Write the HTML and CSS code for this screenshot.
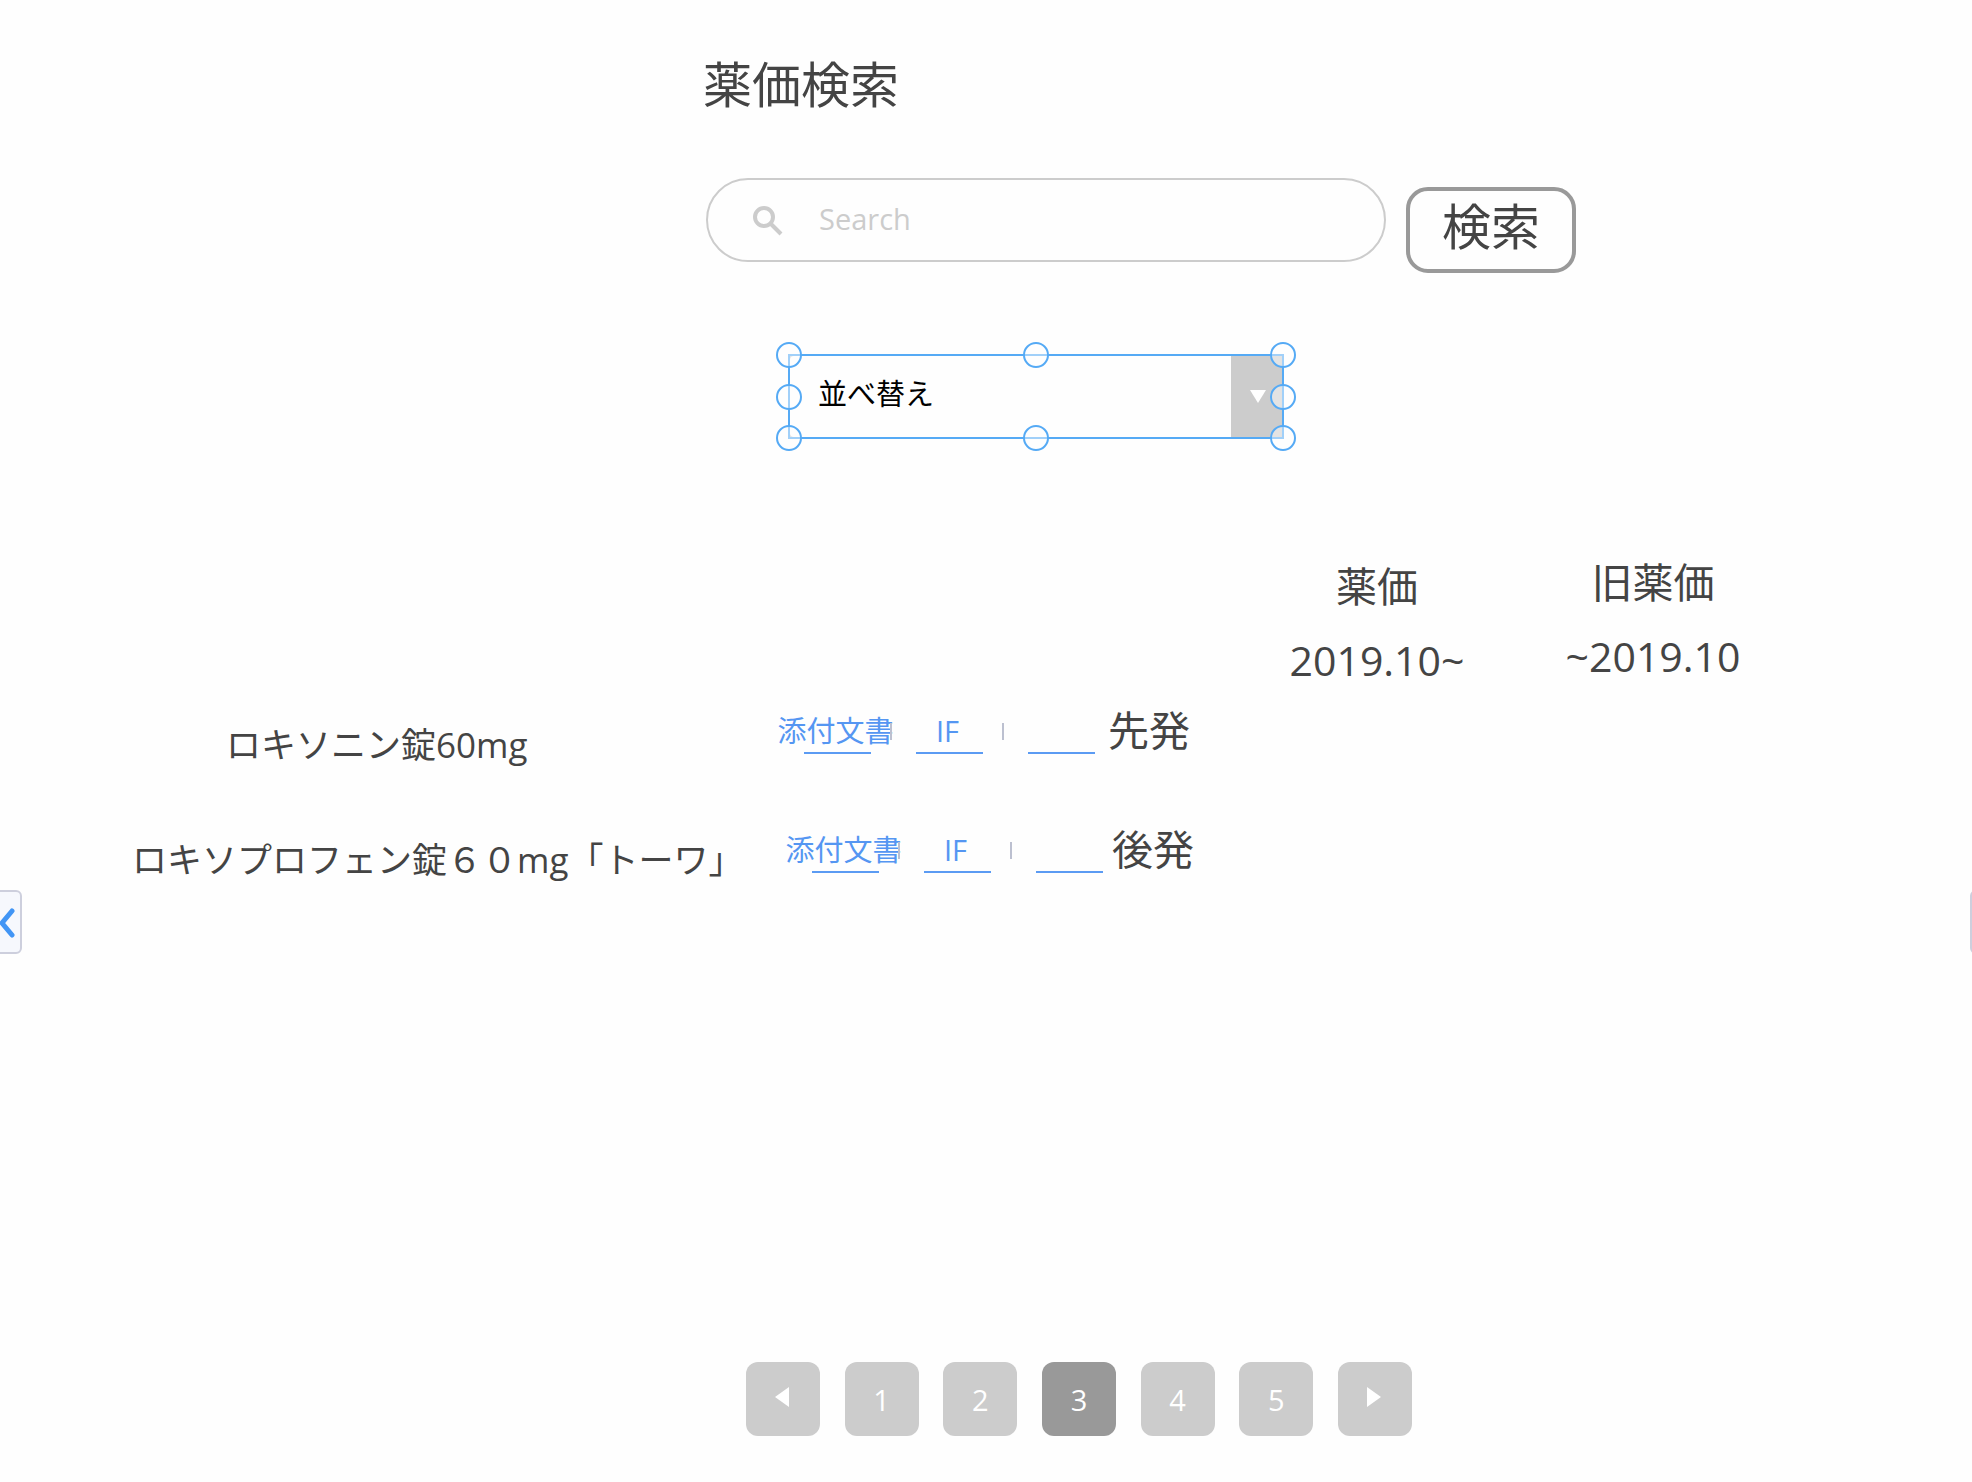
FILE: index.html
```html
<!DOCTYPE html>
<html lang="ja">
<head>
    <meta charset="utf-8">
    <title>薬価検索</title>
    <link rel="stylesheet" href="styles.css">
</head>
<body>
    <main>
        <h1>薬価検索</h1>

        <form class="search-form">
            <div class="search-box">
                <svg class="search-icon" viewBox="0 0 31 31" aria-hidden="true">
                    <circle cx="12" cy="12" r="9"/>
                    <path d="M18 18l11 11"/>
                </svg>
                <input type="text" name="q" placeholder="Search" aria-label="Search">
            </div>
            <button type="submit" class="search-button">検索</button>
        </form>

        <div class="sort">
            <select name="sort" aria-label="並べ替え">
                <option>並べ替え</option>
            </select>
            <svg class="sort-arrow" viewBox="0 0 16 13" aria-hidden="true"><path d="M0 0h16L8 13z"/></svg>
            <!-- selection frame -->
            <div class="selection">
                <span class="handle top left"></span>
                <span class="handle top center"></span>
                <span class="handle top right"></span>
                <span class="handle middle left"></span>
                <span class="handle middle right"></span>
                <span class="handle bottom left"></span>
                <span class="handle bottom center"></span>
                <span class="handle bottom right"></span>
            </div>
        </div>

        <table class="results">
            <colgroup>
                <col class="col-name">
                <col class="col-links">
                <col class="col-type">
                <col class="col-price">
                <col class="col-price">
                <col>
            </colgroup>
            <thead>
                <tr>
                    <td></td>
                    <td></td>
                    <td></td>
                    <th class="price-new">薬価<br>2019.10~</th>
                    <th>旧薬価<br>~2019.10</th>
                    <td></td>
                </tr>
            </thead>
            <tbody>
                <tr class="brand">
                    <td class="name">ロキソニン錠60mg</td>
                    <td class="links">
                        <div class="link-list">
                            <a href="#">添付文書</a>
                            <a href="#">IF</a>
                            <a href="#" aria-label="リンク"></a>
                        </div>
                    </td>
                    <td class="type">先発</td>
                    <td></td>
                    <td></td>
                    <td></td>
                </tr>
                <tr class="generic">
                    <td class="name">ロキソプロフェン錠６０mg「トーワ」</td>
                    <td class="links">
                        <div class="link-list">
                            <a href="#">添付文書</a>
                            <a href="#">IF</a>
                            <a href="#" aria-label="リンク"></a>
                        </div>
                    </td>
                    <td class="type">後発</td>
                    <td></td>
                    <td></td>
                    <td></td>
                </tr>
            </tbody>
        </table>

        <nav class="pager" aria-label="ページ">
            <button type="button" aria-label="前へ"><svg viewBox="0 0 14 20"><path d="M14 0v20L0 10z"/></svg></button>
            <button type="button">1</button>
            <button type="button">2</button>
            <button type="button" class="active" aria-current="page">3</button>
            <button type="button">4</button>
            <button type="button">5</button>
            <button type="button" aria-label="次へ"><svg viewBox="0 0 14 20"><path d="M0 0v20l14-10z"/></svg></button>
        </nav>
    </main>

    <button type="button" class="side-tab prev" aria-label="前の画面">
        <svg viewBox="0 0 16 30"><path d="M12 3L2 15l10 12"/></svg>
    </button>
    <button type="button" class="side-tab next" aria-label="次の画面"></button>
</body>
</html>
```
FILE: styles.css
```css
* {
    box-sizing: border-box;
}

body {
    margin: 0;
    min-height: 100vh;
    position: relative;
    overflow-x: hidden;
    background: #fefefe;
    color: #444;
    font-family: "Open Sans", "Noto Sans CJK JP", sans-serif;
}

button, input, select {
    font-family: inherit;
}

h1 {
    margin: 0;
    padding: 48px 0 0 703px;
    font-size: 49px;
    font-weight: 400;
    line-height: 72px;
}

/* search */
.search-form {
    display: flex;
    align-items: flex-start;
    gap: 20px;
    padding: 58px 0 0 706px;
}

.search-box {
    display: flex;
    align-items: center;
    gap: 36px;
    width: 680px;
    height: 84px;
    padding: 0 44px;
    border: 2px solid #ccc;
    border-radius: 42px;
}

.search-icon {
    width: 31px;
    height: 31px;
    fill: none;
    stroke: #ccc;
    stroke-width: 4;
}

.search-box input {
    flex: 1;
    min-width: 0;
    padding: 0 0 2px;
    border: none;
    outline: none;
    background: none;
    font-size: 29px;
    line-height: 40px;
}

.search-box input::placeholder {
    color: #ccc;
}

.search-button {
    width: 170px;
    height: 86px;
    margin-top: 9px;
    padding: 0 0 10px;
    border: 4px solid #999;
    border-radius: 22px;
    background: none;
    color: #444;
    font-size: 49px;
    line-height: 70px;
}

/* sort drop-down */
.sort {
    position: relative;
    width: 496px;
    height: 85px;
    margin: 81px 0 0 788px;
}

.sort select {
    appearance: none;
    width: 100%;
    height: 100%;
    padding: 0 60px 6px 28px;
    border: 2px solid #ccc;
    border-radius: 6px;
    background: linear-gradient(#ccc, #ccc) right / 51px 100% no-repeat;
    color: #000;
    font-size: 29px;
}

.sort-arrow {
    position: absolute;
    top: 36px;
    right: 18px;
    width: 16px;
    height: 13px;
    fill: #fff;
}

.selection {
    position: absolute;
    inset: 0;
    border: 2px solid #55aaf5;
    pointer-events: none;
}

.handle {
    position: absolute;
    width: 26px;
    height: 26px;
    margin: -13px;
    border: 2px solid #55aaf5;
    border-radius: 50%;
    background: rgba(255, 255, 255, .45);
}

.top { top: -1px; }
.middle { top: 50%; }
.bottom { top: calc(100% + 1px); }
.left { left: -1px; }
.center { left: 50%; }
.right { left: calc(100% + 1px); }

/* results */
.results {
    width: 100%;
    margin-top: 106px;
    border-collapse: collapse;
    table-layout: fixed;
}

.results th,
.results td {
    padding: 0;
    vertical-align: top;
    white-space: nowrap;
}

.results th {
    height: 152px;
    font-size: 41px;
    font-weight: 400;
    line-height: 74px;
}

.results tbody tr {
    height: 119px;
}

.results .price-new {
    padding-top: 4px;
}

.col-name { width: 779px; }
.col-links { width: 329px; }
.col-type { width: 131px; }
.col-price { width: 276px; }

.name {
    font-size: 35px;
    line-height: 48px;
}

.type {
    font-size: 41px;
    line-height: 66px;
}

.results .brand .name { padding: 24px 0 0 226px; }
.results .brand .links { padding-left: 25px; }
.results .generic .name { padding: 20px 0 0 132px; }
.results .generic .links { padding-left: 33px; }
.results .generic .type { padding-left: 4px; }

.link-list {
    display: flex;
    gap: 45px;
    padding-top: 14px;
}

.link-list a {
    position: relative;
    display: flex;
    justify-content: center;
    width: 67px;
    height: 43px;
    padding-right: 4px;
    border-bottom: 2px solid #5b9bf3;
    color: #5596f2;
    font-size: 29px;
    line-height: 40px;
    text-decoration: none;
}

/* divider between links */
.link-list a + a::before {
    content: "";
    position: absolute;
    top: 12px;
    left: -26px;
    width: 2px;
    height: 17px;
    background: #bcc0d0;
}

/* pager */
.pager {
    display: flex;
    justify-content: space-between;
    width: 666px;
    margin: 427px 0 46px 746px;
}

.pager button {
    display: flex;
    align-items: center;
    justify-content: center;
    width: 74px;
    height: 74px;
    padding: 0;
    border: none;
    border-radius: 12px;
    background: #ccc;
    color: #fff;
    font-size: 29px;
}

.pager .active {
    background: #999;
}

.pager svg {
    width: 14px;
    height: 20px;
    margin: 0 2px 4px 0;
    fill: #fff;
}

/* tabs on the window edges */
.side-tab {
    position: absolute;
    top: 60%;
    height: 64px;
    width: 24px;
    margin-top: 1px;
    padding: 0;
    border: 2px solid #cdcfdd;
    background: #f6f8fd;
}

.prev {
    left: -2px;
    border-radius: 0 6px 6px 0;
}

.prev svg {
    display: block;
    width: 16px;
    height: 30px;
    margin-top: 2px;
    fill: none;
    stroke: #4195f5;
    stroke-width: 5;
    stroke-linecap: round;
}

.next {
    right: -22px;
    border-radius: 6px 0 0 6px;
}
```
